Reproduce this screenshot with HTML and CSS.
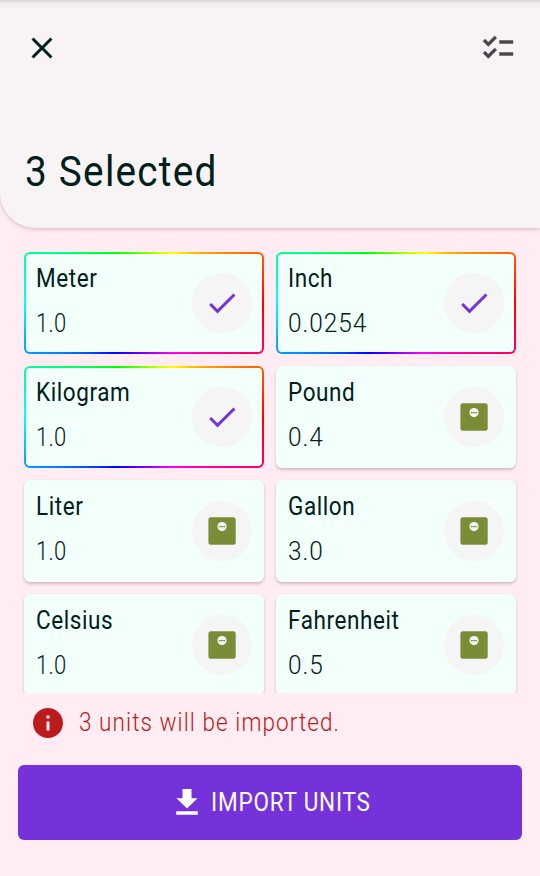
FILE: index.html
```
<!DOCTYPE html>
<html lang="en">
<head>
<meta charset="utf-8">
<title>Import units</title>
<link rel="stylesheet" href="styles.css">
</head>
<body>
<svg class="defs" width="0" height="0">
  <symbol id="check" viewBox="0 0 24 24"><path d="M9 16.17 4.83 12l-1.42 1.41L9 19 21 7l-1.41-1.41z"/></symbol>
  <symbol id="scale" viewBox="0 0 36 36">
    <rect x="4.4" y="4.2" width="27.3" height="27.6" rx="2.5" fill="#7a8d36"/>
    <circle cx="18" cy="13.6" r="4.6" fill="#f5f5f5"/>
    <path d="M14.8 13.6h1.8m.5 0h1.8m.5 0h1.8" stroke="#7a8d36" stroke-width="1.3"/>
  </symbol>
</svg>
<header class="header">
  <div class="toolbar">
    <svg class="icon" viewBox="0 0 24 24"><path d="M19 6.41 17.59 5 12 10.59 6.41 5 5 6.41 10.59 12 5 17.59 6.41 19 12 13.41 17.59 19 19 17.59 13.41 12z"/></svg>
    <svg class="icon icon-list" viewBox="0 0 24 24"><path d="M22 7h-9v2h9V7zm0 8h-9v2h9v-2zM5.54 11 2 7.46l1.41-1.41 2.12 2.12 4.24-4.24 1.41 1.41L5.54 11zm0 8L2 15.46l1.41-1.41 2.12 2.12 4.24-4.24 1.41 1.41L5.54 19z"/></svg>
  </div>
  <h1 class="title"><span>3 Selected</span></h1>
</header>
<main class="grid">
  <article class="card selected"><div class="text"><h2 class="name">Meter</h2><p class="value unit">1.0</p></div><div class="badge"><svg class="check"><use href="#check"/></svg></div></article>
  <article class="card selected"><div class="text"><h2 class="name">Inch</h2><p class="value">0.0254</p></div><div class="badge"><svg class="check"><use href="#check"/></svg></div></article>
  <article class="card selected"><div class="text"><h2 class="name">Kilogram</h2><p class="value unit">1.0</p></div><div class="badge"><svg class="check"><use href="#check"/></svg></div></article>
  <article class="card"><div class="text"><h2 class="name">Pound</h2><p class="value">0.4</p></div><div class="badge"><svg><use href="#scale"/></svg></div></article>
  <article class="card"><div class="text"><h2 class="name">Liter</h2><p class="value unit">1.0</p></div><div class="badge"><svg><use href="#scale"/></svg></div></article>
  <article class="card"><div class="text"><h2 class="name">Gallon</h2><p class="value">3.0</p></div><div class="badge"><svg><use href="#scale"/></svg></div></article>
  <article class="card"><div class="text"><h2 class="name">Celsius</h2><p class="value unit">1.0</p></div><div class="badge"><svg><use href="#scale"/></svg></div></article>
  <article class="card"><div class="text"><h2 class="name">Fahrenheit</h2><p class="value">0.5</p></div><div class="badge"><svg><use href="#scale"/></svg></div></article>
</main>
<footer class="footer">
  <div class="notice">
    <svg viewBox="0 0 24 24"><path d="M12 2C6.48 2 2 6.48 2 12s4.480 10 10 10 10-4.480 10-10S17.520 2 12 2zm1 15h-2v-6h2v6zm0-8h-2V7h2v2z"/></svg>
    <span class="notice-text">3 units will be imported.</span>
  </div>
  <button class="import" type="button">
    <svg viewBox="0 0 36 36"><path d="M13.500 4h9v9.200h6L18 23.500 7.500 13.200h6zM7.200 26.300h21.600v3.400H7.200z"/></svg>
    <span class="import-label">IMPORT UNITS</span>
  </button>
</footer>
</body>
</html>
```
FILE: styles.css
```
* { box-sizing: border-box; }
body {
  margin: 0;
  width: 540px;
  height: 876px;
  overflow: hidden;
  display: flex;
  flex-direction: column;
  background: #ffedf3;
  color: #00201a;
  font-family: Roboto, "Liberation Sans", sans-serif;
}
h1, h2, p { margin: 0; font-weight: 400; white-space: nowrap; }
svg { display: block; flex: none; }
.defs { position: absolute; }
.header {
  flex: none;
  height: 228px;
  background: linear-gradient(#d9d5d7, #eeeaec 3px, #f8f4f6 8px, #f8f4f6);
  border-bottom-left-radius: 36px;
  box-shadow: 0 1px 4px rgba(60, 20, 40, .25);
}
.toolbar {
  display: flex;
  justify-content: space-between;
  align-items: center;
  height: 96px;
  padding: 0 24px;
}
.icon { width: 36px; height: 36px; fill: #00201a; }
.icon-list { fill: #49454f; stroke: #49454f; stroke-width: .3; }
.title {
  padding: 45px 0 0 24.500px;
  font-size: 43px;
  line-height: 60px;
  letter-spacing: 1.400px;
}
.title span, .name, .value, .notice-text, .import-label {
  display: inline-block;
  transform: scaleX(.9);
  transform-origin: left center;
}
.grid {
  flex: none;
  height: 465px;
  padding: 24px;
  display: grid;
  grid-template-columns: 240px 240px;
  grid-auto-rows: 102px;
  gap: 12px;
  overflow: hidden;
}
.card {
  display: flex;
  justify-content: space-between;
  align-items: center;
  padding: 0 12px;
  border-radius: 6px;
  background: #f2fffb;
  box-shadow: 0 2px 3px rgba(60, 20, 40, .22), 0 0 2px rgba(60, 20, 40, .05);
}
.card.selected {
  padding: 0 10px;
  border: 2px solid transparent;
  background:
    linear-gradient(#f2fffb, #f2fffb) padding-box,
    conic-gradient(from 90deg, #f00, #f0f, #00f, #0ff, #0f0, #ff0, #f00) border-box;
  box-shadow: none;
}
.text {
  display: flex;
  flex-direction: column;
  align-items: flex-start;
  gap: 15px;
  width: 150px;
  padding-bottom: 4px;
}
.name { font-size: 25px; line-height: 30px; letter-spacing: .65px; }
.value { font-size: 25px; line-height: 30px; font-weight: 300; letter-spacing: 1px; }
.card .value { transform: scaleX(.975); }
.card .value.unit { transform: scaleX(.88); letter-spacing: .3px; }
.badge {
  flex: none;
  width: 60px;
  height: 60px;
  border-radius: 50%;
  background: #f5f5f5;
  display: grid;
  place-items: center;
}
.badge svg { width: 36px; height: 36px; }
.badge .check { fill: #7632da; }
.footer { flex: 1; display: flex; flex-direction: column; padding: 0 18px; }
.notice {
  display: flex;
  align-items: center;
  height: 60px;
  padding-left: 12px;
  gap: 13px;
  color: #bb1b1b;
}
.notice svg { width: 36px; height: 36px; fill: #bb1b1b; }
.notice-text {
  padding-bottom: 2px;
  font-size: 25px;
  font-weight: 300;
  letter-spacing: 1.200px;
  white-space: nowrap;
}
.import {
  margin: 12px 0 0;
  padding: 0 0 0 151px;
  height: 75px;
  border: 0;
  border-radius: 6px;
  background: #7632da;
  color: #fff;
  font: 400 25px Roboto, "Liberation Sans", sans-serif;
  display: flex;
  align-items: center;
  gap: 6px;
}
.import svg { width: 36px; height: 36px; fill: #fff; }
.import-label { letter-spacing: .9px; white-space: nowrap; }
```
